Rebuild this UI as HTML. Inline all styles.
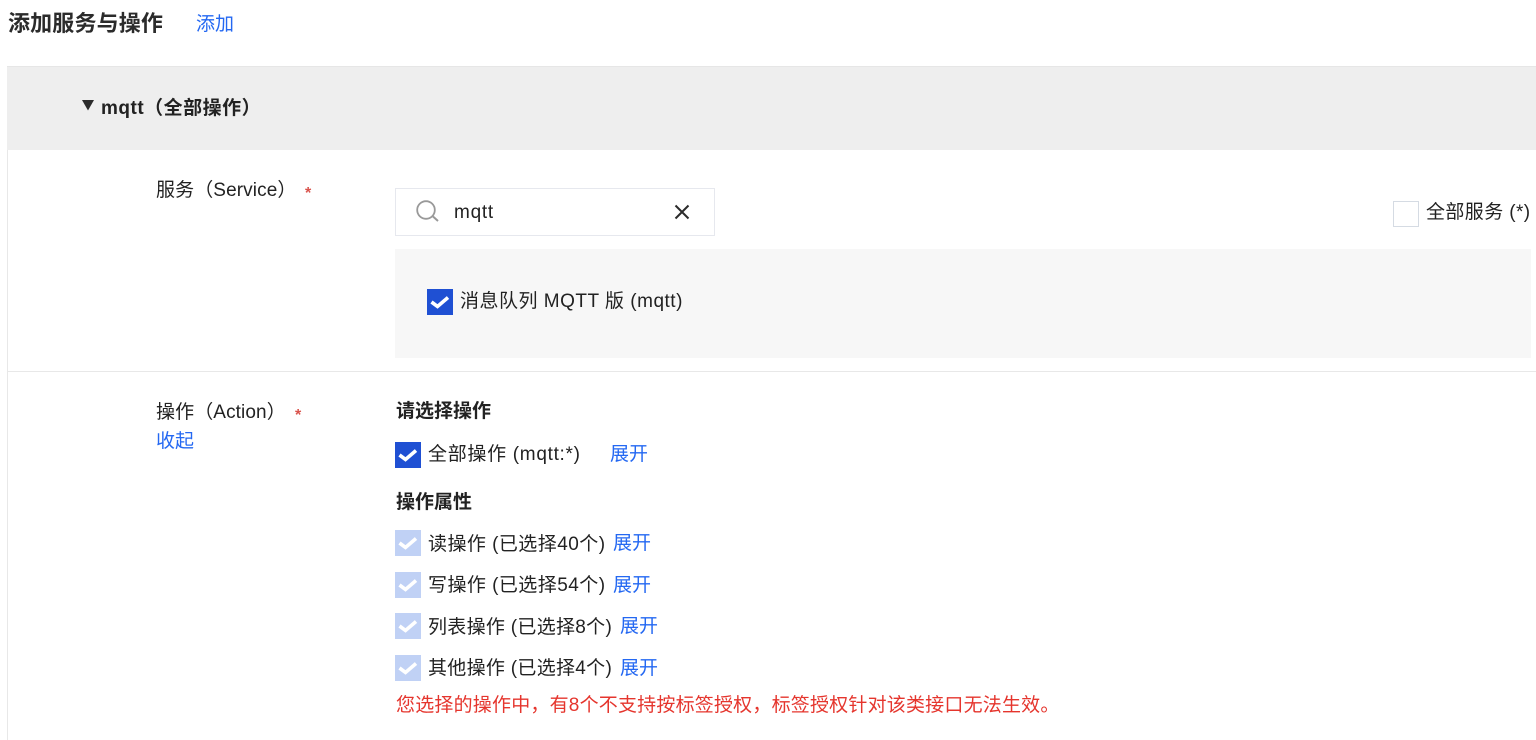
<!DOCTYPE html>
<html lang="zh-CN">
<head>
<meta charset="utf-8">
<title>添加服务与操作</title>
<style>
html,body{margin:0;padding:0;background:#fff;width:1536px;height:740px;overflow:hidden}
body{position:relative;font-family:"Liberation Sans","Noto Sans CJK SC",sans-serif;font-size:19px;color:#222}
.a{position:absolute}
.t{position:absolute;white-space:nowrap;line-height:26px;height:26px}
.b{font-weight:700}
.l{color:#2468f2}
.cb{position:absolute;width:26px;height:26px;background:#1f50d3}
.cb.d{background:#c0d1f5}
.cb svg{display:block}
.s{color:#d9534c;font-weight:700}
</style>
</head>
<body>
<div class="t b" style="left:8px;top:11px;font-size:22px;color:#2b2b2b;letter-spacing:.15px">添加服务与操作</div>
<div class="t l" style="left:196px;top:12px">添加</div>

<div class="a" style="left:7px;top:66px;width:1529px;height:84px;background:#eeeeee;border-top:1px solid #e6e6e6;box-sizing:border-box"></div>
<div class="a" style="left:7px;top:150px;width:1px;height:590px;background:#e8e8e8"></div>
<svg class="a" style="left:81px;top:100px" width="14" height="11"><path d="M1 0H13L7 10.5Z" fill="#2b2b2b"/></svg>
<div class="t b" style="left:101px;top:96px;color:#222;letter-spacing:.5px">mqtt（全部操作）</div>

<div class="t" style="left:156px;top:178px;letter-spacing:.1px">服务（Service）</div>
<div class="t s" style="left:305px;top:181px;font-size:16px">*</div>

<div class="a" style="left:395px;top:188px;width:320px;height:48px;border:1px solid #e6e8ee;box-sizing:border-box"></div>
<svg class="a" style="left:415px;top:199px" width="26" height="26" fill="none"><circle cx="11" cy="11" r="8.8" stroke="#999" stroke-width="1.8"/><path d="M18 17.5L23 22" stroke="#999" stroke-width="2"/></svg>
<div class="t" style="left:454px;top:200px;letter-spacing:.75px">mqtt</div>
<svg class="a" style="left:674px;top:204px" width="16" height="16" fill="none"><path d="M1.5 1.5L14.5 14.5M14.5 1.5L1.5 14.5" stroke="#2b2b2b" stroke-width="2"/></svg>

<div class="a" style="left:1393px;top:201px;width:26px;height:26px;border:1px solid #d5dbe3;box-sizing:border-box;background:#fff"></div>
<div class="t" style="left:1426px;top:200px;letter-spacing:.4px">全部服务 (*)</div>

<div class="a" style="left:395px;top:249px;width:1136px;height:109px;background:#f7f7f7"></div>
<div class="cb" style="left:427px;top:289px"><svg width="26" height="26" fill="none"><path d="M4.5 13L10.5 17.5L21 8.5" stroke="#fff" stroke-width="3.6"/></svg></div>
<div class="t" style="left:460px;top:289px;letter-spacing:.5px">消息队列 MQTT 版 (mqtt)</div>

<div class="a" style="left:8px;top:371px;width:1528px;height:1px;background:#e8e8e8"></div>

<div class="t" style="left:156px;top:400px;letter-spacing:.1px">操作（Action）</div>
<div class="t s" style="left:295px;top:403px;font-size:16px">*</div>
<div class="t l" style="left:156px;top:429px">收起</div>

<div class="t b" style="left:396px;top:399px">请选择操作</div>
<div class="cb" style="left:395px;top:442px"><svg width="26" height="26" fill="none"><path d="M4.5 13L10.5 17.5L21 8.5" stroke="#fff" stroke-width="3.6"/></svg></div>
<div class="t" style="left:428px;top:442px;letter-spacing:.7px">全部操作 (mqtt:*)</div>
<div class="t l" style="left:610px;top:442px">展开</div>

<div class="t b" style="left:396px;top:490px">操作属性</div>

<div class="cb d" style="left:395px;top:530px"><svg width="26" height="26" fill="none"><path d="M4.5 13L10.5 17.5L21 8.5" stroke="#fff" stroke-width="3.6"/></svg></div>
<div class="t" style="left:428px;top:532px;letter-spacing:.45px">读操作 (已选择40个)</div>
<div class="t l" style="left:613px;top:531px">展开</div>

<div class="cb d" style="left:395px;top:572px"><svg width="26" height="26" fill="none"><path d="M4.5 13L10.5 17.5L21 8.5" stroke="#fff" stroke-width="3.6"/></svg></div>
<div class="t" style="left:428px;top:573px;letter-spacing:.45px">写操作 (已选择54个)</div>
<div class="t l" style="left:613px;top:573px">展开</div>

<div class="cb d" style="left:395px;top:613px"><svg width="26" height="26" fill="none"><path d="M4.5 13L10.5 17.5L21 8.5" stroke="#fff" stroke-width="3.6"/></svg></div>
<div class="t" style="left:428px;top:615px;letter-spacing:.3px">列表操作 (已选择8个)</div>
<div class="t l" style="left:620px;top:614px">展开</div>

<div class="cb d" style="left:395px;top:655px"><svg width="26" height="26" fill="none"><path d="M4.5 13L10.5 17.5L21 8.5" stroke="#fff" stroke-width="3.6"/></svg></div>
<div class="t" style="left:428px;top:656px;letter-spacing:.3px">其他操作 (已选择4个)</div>
<div class="t l" style="left:620px;top:656px">展开</div>

<div class="t" style="left:396px;top:693px;color:#e5352d;letter-spacing:.2px">您选择的操作中，有8个不支持按标签授权，标签授权针对该类接口无法生效。</div>
</body>
</html>
